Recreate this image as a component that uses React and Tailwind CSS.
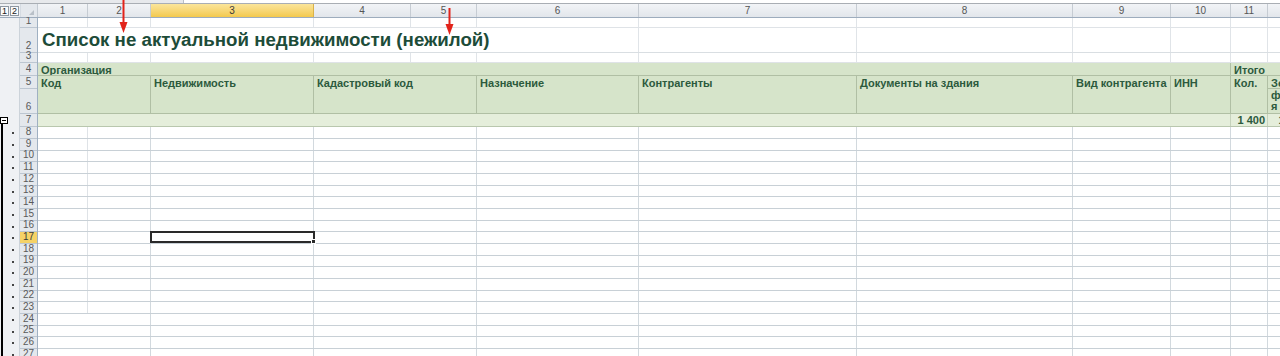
import React from 'react';

const HC = { 10: 'h-[10px]', 11: 'h-[11px]', 12: 'h-[12px]', 13: 'h-[13px]', 25: 'h-[25px]' };
const COLW = ['w-[50px]', 'w-[63px]', 'w-[163px]', 'w-[97px]', 'w-[66px]', 'w-[162px]', 'w-[218px]', 'w-[216px]', 'w-[98px]', 'w-[60px]', 'w-[37px]', 'w-[37px]', 'w-[60px]'];

const TOP_ROWS = [
  { n: 1, h: 10 }, { n: 2, h: 25 }, { n: 3, h: 10 }, { n: 4, h: 13 }, { n: 5, h: 13 }, { n: 6, h: 25 }, { n: 7, h: 13 },
];
const BODY_ROWS = Array.from({ length: 20 }, (_, i) => ({ n: 8 + i, h: [12, 12, 11][i % 3] }));
const ALL_ROWS = [...TOP_ROWS, ...BODY_ROWS];

const HDR = 'text-[11px] font-bold text-[#2c5a3d] leading-[12px] pl-[3px] pt-[1px] overflow-hidden whitespace-nowrap';

function RowNum({ n, h }) {
  const hl = n === 17;
  return (
    <div
      className={`${HC[h]} shrink-0 flex items-end justify-center border-b border-[#bcc6d1] text-[10px] leading-none pb-[1px] ${
        hl ? 'bg-[#f5d266] text-[#3a3a3a]' : 'bg-[#e4e8ed] text-[#5a5a5a]'
      }`}
    >
      {n}
    </div>
  );
}

function PlainRow({ h }) {
  return (
    <div className={`${HC[h]} flex border-b border-[#dfe3e7]`}>
      {COLW.map((w, i) => (
        <div key={i} className={`${w} shrink-0 border-r border-[#e0e4e8]`} />
      ))}
    </div>
  );
}

function BodyRow({ n, h }) {
  const sel = n === 17;
  return (
    <div className={`${HC[h]} flex border-b border-[#c8d0d6]`}>
      <div className={`w-[50px] shrink-0 ${n <= 23 ? 'border-r border-[#dfe3e7]' : ''}`} />
      <div className="w-[63px] shrink-0 border-r border-[#d2d9de]" />
      <div className="relative w-[163px] shrink-0 border-r border-[#d2d9de]">
        {sel && (
          <div className="absolute -left-[1px] -right-[2px] -top-[1px] bottom-0 border-2 border-[#2a2a2a]">
            <div className="absolute -right-[3px] -bottom-[3px] w-[5px] h-[5px] bg-[#2a2a2a] border border-white" />
          </div>
        )}
      </div>
      <div className="w-[163px] shrink-0 border-r border-[#d2d9de]" />
      <div className="w-[162px] shrink-0 border-r border-[#d2d9de]" />
      <div className="w-[218px] shrink-0 border-r border-[#d2d9de]" />
      <div className="w-[216px] shrink-0 border-r border-[#d2d9de]" />
      <div className="w-[98px] shrink-0 border-r border-[#d2d9de]" />
      <div className="w-[60px] shrink-0 border-r border-[#d2d9de]" />
      <div className="w-[37px] shrink-0 border-r border-[#d2d9de]" />
      <div className="w-[37px] shrink-0 border-r border-[#d2d9de]" />
    </div>
  );
}

function HeaderBlock() {
  const cells = [
    ['w-[113px]', 'Код'],
    ['w-[163px]', 'Недвижимость'],
    ['w-[163px]', 'Кадастровый код'],
    ['w-[162px]', 'Назначение'],
    ['w-[218px]', 'Контрагенты'],
    ['w-[216px]', 'Документы на здания'],
    ['w-[98px]', 'Вид контрагента'],
    ['w-[60px]', 'ИНН'],
  ];
  return (
    <div className="flex h-[51px] bg-[#d6e4ca] border-b border-[#b0bfa4]">
      <div className="w-[1193px] shrink-0 flex flex-col border-r border-[#b0bfa4]">
        <div className={`h-[13px] border-b border-[#b0bfa4] ${HDR}`}>Организация</div>
        <div className="flex flex-1">
          {cells.map(([w, t], i) => (
            <div key={i} className={`${w} shrink-0 border-r border-[#b0bfa4] ${HDR}`}>
              {t}
            </div>
          ))}
        </div>
      </div>
      <div className="w-[74px] shrink-0 flex flex-col border-r border-[#b0bfa4]">
        <div className={`h-[13px] border-b border-[#b0bfa4] ${HDR}`}>Итого</div>
        <div className="flex flex-1">
          <div className={`w-[37px] shrink-0 border-r border-[#b0bfa4] ${HDR}`}>Кол.</div>
          <div className="w-[36px] shrink-0 flex flex-col">
            <div className={`h-[13px] border-b border-[#b0bfa4] ${HDR}`}>Земельные</div>
            <div className="flex-1 text-[11px] font-bold text-[#2c5a3d] leading-[11px] pl-[3px] pt-[1px] overflow-hidden">
              <div>фактическ</div>
              <div>я</div>
            </div>
          </div>
        </div>
      </div>
    </div>
  );
}

function TitleRow() {
  return (
    <div className="flex h-[25px] border-b border-[#d9dee2]">
      <div className="w-[601px] shrink-0 border-r border-[#e0e4e8] flex items-end pl-[4px] pb-[2px]">
        <span className="text-[18.7px] font-bold text-[#1d4c39] leading-none whitespace-nowrap">
          Список не актуальной недвижимости (нежилой)
        </span>
      </div>
      {COLW.slice(6).map((w, i) => (
        <div key={i} className={`${w} shrink-0 border-r border-[#e0e4e8]`} />
      ))}
    </div>
  );
}

function TotalRow() {
  return (
    <div className="flex h-[13px] bg-[#e5eedb] border-b border-[#b9c7ae]">
      <div className="w-[1193px] shrink-0 border-r border-[#c6d2bc]" />
      <div className="w-[37px] shrink-0 border-r border-[#c6d2bc] text-right pr-[2px] text-[11px] font-bold text-[#2c5a3d] leading-[12px] whitespace-nowrap">
        1 400
      </div>
      <div className="w-[41px] shrink-0 border-r border-[#c6d2bc] text-right pr-[2px] text-[11px] font-bold text-[#2c5a3d] leading-[12px] whitespace-nowrap">
        1 400
      </div>
    </div>
  );
}

function Gutter() {
  return (
    <div className="w-[20px] shrink-0 flex flex-col bg-[#eff1f4] border-r border-[#ccd3da]">
      {TOP_ROWS.slice(0, 6).map((r) => (
        <div key={r.n} className={`${HC[r.h]} shrink-0`} />
      ))}
      <div className="h-[13px] shrink-0 flex flex-col">
        <div className="mt-[3px] w-[8px] h-[7px] border border-black bg-white flex items-center justify-center">
          <div className="w-[4px] h-[1px] bg-black" />
        </div>
        <div className="ml-[1px] w-[2px] flex-1 bg-black" />
      </div>
      <div className="ml-[1px] border-l-2 border-black flex flex-col">
        {BODY_ROWS.map((r) => (
          <div key={r.n} className={`${HC[r.h]} shrink-0 flex items-center pl-[9px]`}>
            <div className="w-[2px] h-[2px] bg-[#444]" />
          </div>
        ))}
      </div>
    </div>
  );
}

function ColumnHeader() {
  return (
    <div className="flex h-[14px] border-b border-[#9dacbd]">
      <div className="w-[20px] shrink-0 bg-[#eff1f4] flex items-center gap-[1px]">
        <div className="w-[9px] h-[10px] border border-[#8f98a3] bg-[#fafbfc] text-[9px] leading-[8px] text-center text-[#222]">1</div>
        <div className="w-[9px] h-[10px] border border-[#8f98a3] bg-[#fafbfc] text-[9px] leading-[8px] text-center text-[#222]">2</div>
      </div>
      <div className="relative w-[18px] shrink-0 bg-[#e4e8ed] border-r border-[#c4cbd3] border-l border-l-[#d5dbe2]">
        <div className="absolute right-[3px] bottom-[2px] w-0 h-0 border-l-[5px] border-l-transparent border-b-[5px] border-b-[#b9c0c8]" />
      </div>
      {COLW.map((w, i) => (
        <div
          key={i}
          className={`${w} shrink-0 border-r flex items-center justify-center text-[10px] leading-none ${
            i === 2
              ? 'bg-gradient-to-b from-[#fbe59a] to-[#f3c94c] border-[#d9b24a] text-[#3a3a3a]'
              : 'bg-gradient-to-b from-[#f2f4f7] to-[#e2e6eb] border-[#c6ccd3] text-[#555]'
          }`}
        >
          {i < 11 ? i + 1 : ''}
        </div>
      ))}
    </div>
  );
}

export default function App() {
  return (
    <div className="relative w-[1280px] h-[356px] overflow-hidden bg-white font-['Liberation_Sans',Arial,sans-serif]">
      <div className="flex h-[4px] border-b border-[#a9aeb4]">
        <div className="w-[184px] shrink-0 bg-[#e7e9ec] border-r border-[#b9bec4]" />
        <div className="flex-1 bg-white" />
      </div>
      <ColumnHeader />
      <div className="flex">
        <Gutter />
        <div className="w-[18px] shrink-0 flex flex-col border-r border-[#9fb0c2]">
          {ALL_ROWS.map((r) => (
            <RowNum key={r.n} {...r} />
          ))}
        </div>
        <div className="flex flex-col">
          <PlainRow h={10} />
          <TitleRow />
          <PlainRow h={10} />
          <HeaderBlock />
          <TotalRow />
          {BODY_ROWS.map((r) => (
            <BodyRow key={r.n} {...r} />
          ))}
        </div>
      </div>
      <svg className="absolute left-0 top-0 pointer-events-none" width="1280" height="60">
        <line x1="123.5" y1="0" x2="123.5" y2="24" stroke="#e2231a" strokeWidth="2" />
        <polygon points="119.5,22 127.5,22 123.5,33" fill="#e2231a" />
        <line x1="449.5" y1="8" x2="449.5" y2="26" stroke="#e2231a" strokeWidth="2" />
        <polygon points="445.5,24 453.5,24 449.5,35" fill="#e2231a" />
      </svg>
    </div>
  );
}
